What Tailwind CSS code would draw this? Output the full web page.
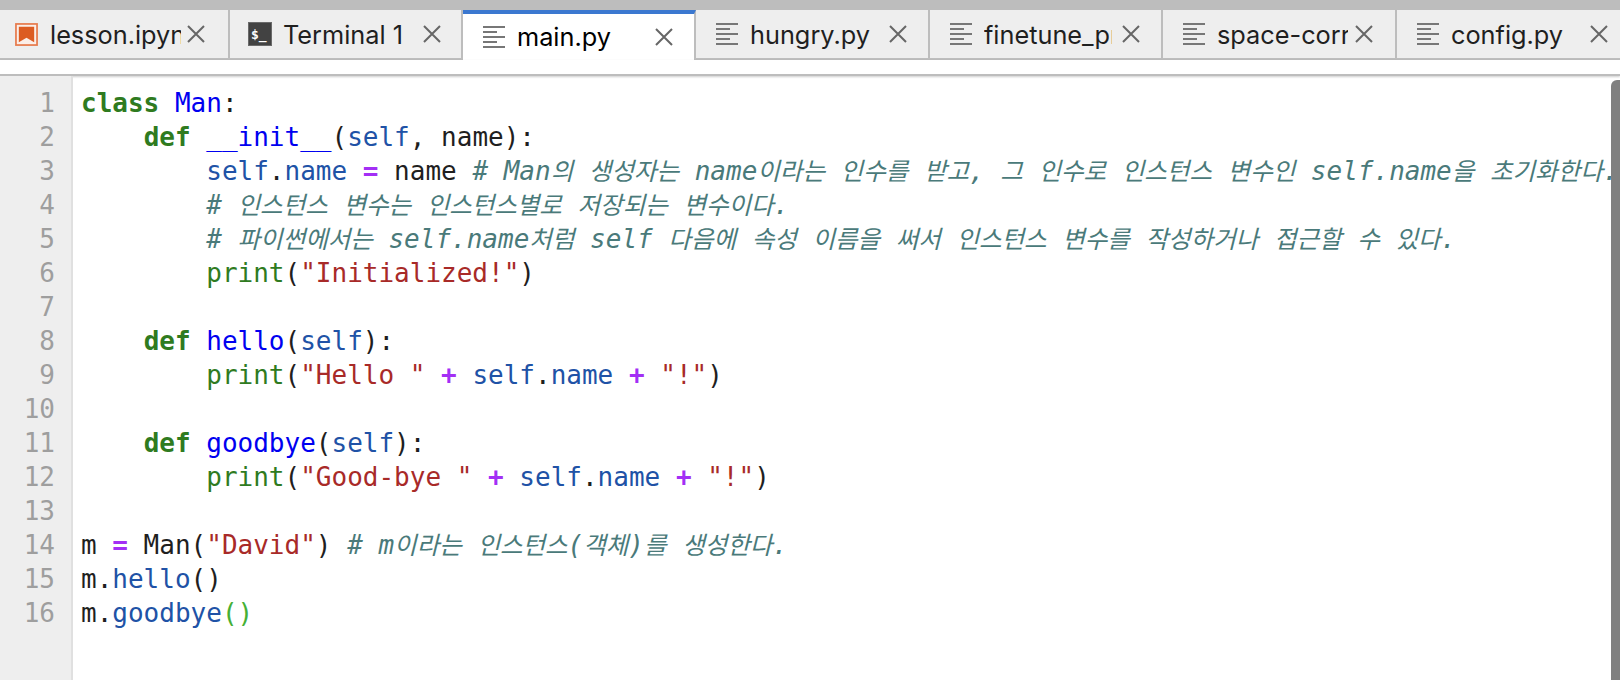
<!DOCTYPE html>
<html lang="ko">
<head>
    <meta charset="UTF-8">
    <title>main.py</title>
    <script src="https://cdn.jsdelivr.net/npm/@tailwindcss/browser@4"></script>
</head>
<body class="bg-white overflow-hidden">
    <div class="w-[1620px] h-[680px] flex flex-col overflow-hidden">
        <!-- top strip -->
        <div class="h-[10px] bg-[#bdbdbd] shrink-0"></div>

        <!-- tabs -->
        <div class="h-[50px] shrink-0 flex font-['Inter','Liberation_Sans',sans-serif] text-[25.3px] text-[#1f1f1f]">
            <div class="w-[230px] shrink-0 flex items-center bg-[#eeeeee] border-b-2 border-r-2 border-[#bdbdbd] pl-[15px]">
                <svg class="w-[23px] h-[23px] shrink-0" viewBox="0 0 24 24"><rect x="1" y="1" width="22" height="22" fill="#fbeee8" stroke="#e67a4c" stroke-width="1.800"/><path d="M4 4H20V20L12 15.500L4 20Z" fill="#dc5c22"/></svg>
                <span class="w-[131px] ml-[12px] pt-[2px] overflow-hidden whitespace-nowrap">lesson.ipynb</span>
                <svg class="w-[18px] h-[18px] ml-[6px] shrink-0" viewBox="0 0 18 18"><path d="M1 1L17 17M17 1L1 17" stroke="#666" stroke-width="2"/></svg>
            </div>
            <div class="w-[233px] shrink-0 flex items-center bg-[#eeeeee] border-b-2 border-r-2 border-[#bdbdbd] pl-[18px]">
                <svg class="w-[24px] h-[24px] shrink-0" viewBox="0 0 24 24"><rect x="0.500" y="0.500" width="23" height="23" fill="#424242" stroke="#6a6a6a"/><text x="3" y="17" font-size="13" font-weight="700" font-family="DejaVu Sans Mono" fill="#fff">$_</text></svg>
                <span class="w-[131px] ml-[11px] pt-[2px] overflow-hidden whitespace-nowrap">Terminal 1</span>
                <svg class="w-[18px] h-[18px] ml-[9px] shrink-0" viewBox="0 0 18 18"><path d="M1 1L17 17M17 1L1 17" stroke="#666" stroke-width="2"/></svg>
            </div>
            <div class="w-[233px] shrink-0 flex items-center bg-white border-t-4 border-t-[#3b78d0] border-r-2 border-r-[#bdbdbd] pl-[20px] text-black">
                <svg class="w-[22px] h-[22px] shrink-0" viewBox="0 0 22 22"><path d="M0 1H22M0 6H14M0 11H22M0 16H14M0 21H22" stroke="#777" stroke-width="2"/></svg>
                <span class="w-[131px] ml-[12px] overflow-hidden whitespace-nowrap">main.py</span>
                <svg class="w-[18px] h-[18px] ml-[7px] shrink-0" viewBox="0 0 18 18"><path d="M1 1L17 17M17 1L1 17" stroke="#666" stroke-width="2"/></svg>
            </div>
            <div class="w-[234px] shrink-0 flex items-center bg-[#eeeeee] border-b-2 border-r-2 border-[#bdbdbd] pl-[20px]">
                <svg class="w-[22px] h-[22px] shrink-0" viewBox="0 0 22 22"><path d="M0 1H22M0 6H14M0 11H22M0 16H14M0 21H22" stroke="#777" stroke-width="2"/></svg>
                <span class="w-[131px] ml-[12px] pt-[2px] overflow-hidden whitespace-nowrap">hungry.py</span>
                <svg class="w-[18px] h-[18px] ml-[8px] shrink-0" viewBox="0 0 18 18"><path d="M1 1L17 17M17 1L1 17" stroke="#666" stroke-width="2"/></svg>
            </div>
            <div class="w-[233px] shrink-0 flex items-center bg-[#eeeeee] border-b-2 border-r-2 border-[#bdbdbd] pl-[20px]">
                <svg class="w-[22px] h-[22px] shrink-0" viewBox="0 0 22 22"><path d="M0 1H22M0 6H14M0 11H22M0 16H14M0 21H22" stroke="#777" stroke-width="2"/></svg>
                <span class="w-[128px] ml-[12px] pt-[2px] overflow-hidden whitespace-nowrap">finetune_project.py</span>
                <svg class="w-[18px] h-[18px] ml-[10px] shrink-0" viewBox="0 0 18 18"><path d="M1 1L17 17M17 1L1 17" stroke="#666" stroke-width="2"/></svg>
            </div>
            <div class="w-[234px] shrink-0 flex items-center bg-[#eeeeee] border-b-2 border-r-2 border-[#bdbdbd] pl-[20px]">
                <svg class="w-[22px] h-[22px] shrink-0" viewBox="0 0 22 22"><path d="M0 1H22M0 6H14M0 11H22M0 16H14M0 21H22" stroke="#777" stroke-width="2"/></svg>
                <span class="w-[131px] ml-[12px] pt-[2px] overflow-hidden whitespace-nowrap">space-correct.py</span>
                <svg class="w-[18px] h-[18px] ml-[7px] shrink-0" viewBox="0 0 18 18"><path d="M1 1L17 17M17 1L1 17" stroke="#666" stroke-width="2"/></svg>
            </div>
            <div class="flex-1 flex items-center bg-[#eeeeee] border-b-2 border-[#bdbdbd] pl-[20px]">
                <svg class="w-[22px] h-[22px] shrink-0" viewBox="0 0 22 22"><path d="M0 1H22M0 6H14M0 11H22M0 16H14M0 21H22" stroke="#777" stroke-width="2"/></svg>
                <span class="w-[131px] ml-[12px] pt-[2px] overflow-hidden whitespace-nowrap">config.py</span>
                <svg class="w-[18px] h-[18px] ml-[8px] shrink-0" viewBox="0 0 18 18"><path d="M1 1L17 17M17 1L1 17" stroke="#666" stroke-width="2"/></svg>
            </div>
        </div>

        <!-- toolbar gap -->
        <div class="h-[16px] shrink-0 bg-white border-b-2 border-[#bdbdbd] shadow-[0_1px_2px_rgba(0,0,0,0.2)]"></div>

        <!-- editor -->
        <div class="relative flex-1 flex font-['DejaVu_Sans_Mono','Noto_Sans_CJK_KR',monospace] text-[26px] leading-[34px]">
            <div class="w-[73px] shrink-0 bg-[#eeeeee] border-r-2 border-[#e0e0e0] pt-[10px] pr-[16px] text-right text-[#9e9e9e]">
                <div>1</div><div>2</div><div>3</div><div>4</div><div>5</div><div>6</div><div>7</div><div>8</div>
                <div>9</div><div>10</div><div>11</div><div>12</div><div>13</div><div>14</div><div>15</div><div>16</div>
            </div>
            <div class="flex-1 min-w-0 pt-[10px] pl-[8px] text-[#1f1f1f] overflow-hidden">
                <div class="h-[34px] whitespace-pre"><span class="font-bold text-[#2f7b1f]">class</span> <span class="text-[#0000f0]">Man</span>:</div>
                <div class="h-[34px] whitespace-pre">    <span class="font-bold text-[#2f7b1f]">def</span> <span class="text-[#0000f0]">__init__</span>(<span class="text-[#2052a6]">self</span>, name):</div>
                <div class="h-[34px] whitespace-pre">        <span class="text-[#2052a6]">self</span>.<span class="text-[#2052a6]">name</span> <span class="font-bold text-[#a32ff5]">=</span> name <span class="italic text-[#4a7a7a]"># Man<span class="text-[24.5px]">의</span> <span class="text-[24.5px]">생성자는</span> name<span class="text-[24.5px]">이라는</span> <span class="text-[24.5px]">인수를</span> <span class="text-[24.5px]">받고</span>, <span class="text-[24.5px]">그</span> <span class="text-[24.5px]">인수로</span> <span class="text-[24.5px]">인스턴스</span> <span class="text-[24.5px]">변수인</span> self.name<span class="text-[24.5px]">을</span> <span class="text-[24.5px]">초기화한다</span>.</span></div>
                <div class="h-[34px] whitespace-pre">        <span class="italic text-[#4a7a7a]"># <span class="text-[24.5px]">인스턴스</span> <span class="text-[24.5px]">변수는</span> <span class="text-[24.5px]">인스턴스별로</span> <span class="text-[24.5px]">저장되는</span> <span class="text-[24.5px]">변수이다</span>.</span></div>
                <div class="h-[34px] whitespace-pre">        <span class="italic text-[#4a7a7a]"># <span class="text-[24.5px]">파이썬에서는</span> self.name<span class="text-[24.5px]">처럼</span> self <span class="text-[24.5px]">다음에</span> <span class="text-[24.5px]">속성</span> <span class="text-[24.5px]">이름을</span> <span class="text-[24.5px]">써서</span> <span class="text-[24.5px]">인스턴스</span> <span class="text-[24.5px]">변수를</span> <span class="text-[24.5px]">작성하거나</span> <span class="text-[24.5px]">접근할</span> <span class="text-[24.5px]">수</span> <span class="text-[24.5px]">있다</span>.</span></div>
                <div class="h-[34px] whitespace-pre">        <span class="text-[#2f7b1f]">print</span>(<span class="text-[#a82a28]">"Initialized!"</span>)</div>
                <div class="h-[34px]"></div>
                <div class="h-[34px] whitespace-pre">    <span class="font-bold text-[#2f7b1f]">def</span> <span class="text-[#0000f0]">hello</span>(<span class="text-[#2052a6]">self</span>):</div>
                <div class="h-[34px] whitespace-pre">        <span class="text-[#2f7b1f]">print</span>(<span class="text-[#a82a28]">"Hello "</span> <span class="font-bold text-[#a32ff5]">+</span> <span class="text-[#2052a6]">self</span>.<span class="text-[#2052a6]">name</span> <span class="font-bold text-[#a32ff5]">+</span> <span class="text-[#a82a28]">"!"</span>)</div>
                <div class="h-[34px]"></div>
                <div class="h-[34px] whitespace-pre">    <span class="font-bold text-[#2f7b1f]">def</span> <span class="text-[#0000f0]">goodbye</span>(<span class="text-[#2052a6]">self</span>):</div>
                <div class="h-[34px] whitespace-pre">        <span class="text-[#2f7b1f]">print</span>(<span class="text-[#a82a28]">"Good-bye "</span> <span class="font-bold text-[#a32ff5]">+</span> <span class="text-[#2052a6]">self</span>.<span class="text-[#2052a6]">name</span> <span class="font-bold text-[#a32ff5]">+</span> <span class="text-[#a82a28]">"!"</span>)</div>
                <div class="h-[34px]"></div>
                <div class="h-[34px] whitespace-pre">m <span class="font-bold text-[#a32ff5]">=</span> Man(<span class="text-[#a82a28]">"David"</span>) <span class="italic text-[#4a7a7a]"># m<span class="text-[24.5px]">이라는</span> <span class="text-[24.5px]">인스턴스</span>(<span class="text-[24.5px]">객체</span>)<span class="text-[24.5px]">를</span> <span class="text-[24.5px]">생성한다</span>.</span></div>
                <div class="h-[34px] whitespace-pre">m.<span class="text-[#2052a6]">hello</span>()</div>
                <div class="h-[34px] whitespace-pre">m.<span class="text-[#2052a6]">goodbye</span><span class="text-[#45b035]">()</span></div>
            </div>
            <!-- scrollbar -->
            <div class="absolute right-0 top-[4px] bottom-0 w-[9px] bg-[#808080] rounded-tl-[6px]"></div>
        </div>
    </div>
</body>
</html>
